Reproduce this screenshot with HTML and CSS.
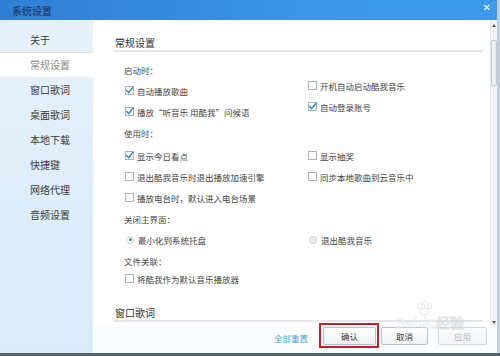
FILE: index.html
```html
<!DOCTYPE html>
<html lang="zh-CN">
<head>
<meta charset="utf-8">
<title>系统设置</title>
<link rel="stylesheet" href="styles.css">
</head>
<body>
<div class="screen">
  <div class="window">
    <div class="titlebar">
      <span class="title">系统设置</span>
      <span class="close">✕</span>
    </div>
    <div class="main">
      <nav class="sidebar">
        <div class="nav-item">关于</div>
        <div class="nav-item active">常规设置</div>
        <div class="nav-item">窗口歌词</div>
        <div class="nav-item">桌面歌词</div>
        <div class="nav-item">本地下载</div>
        <div class="nav-item">快捷键</div>
        <div class="nav-item">网络代理</div>
        <div class="nav-item">音频设置</div>
      </nav>
      <div class="content">
        <div class="scroll-area">
          <div class="pane">
            <div class="heading">常规设置</div>
            <div class="section">
              <div class="label first">启动时：</div>
              <div class="startup">
                <div class="col left-col">
                  <div class="row"><span class="cb on"><svg viewBox="0 0 9 9"><path d="M1.6 4.4 L3.6 6.8 L7.8 1.4"/></svg></span>自动播放歌曲</div>
                  <div class="row"><span class="cb on"><svg viewBox="0 0 9 9"><path d="M1.6 4.4 L3.6 6.8 L7.8 1.4"/></svg></span>播放“听音乐 用酷我”问候语</div>
                </div>
                <div class="col right-col">
                  <div class="row"><span class="cb"></span>开机自动启动酷我音乐</div>
                  <div class="row"><span class="cb on"><svg viewBox="0 0 9 9"><path d="M1.6 4.4 L3.6 6.8 L7.8 1.4"/></svg></span>自动登录账号</div>
                </div>
              </div>
              <div class="label">使用时：</div>
              <div class="grid usage">
                <div class="row"><span class="cb on"><svg viewBox="0 0 9 9"><path d="M1.6 4.4 L3.6 6.8 L7.8 1.4"/></svg></span>显示今日看点</div>
                <div class="row"><span class="cb"></span>显示抽奖</div>
                <div class="row"><span class="cb"></span>退出酷我音乐时退出播放加速引擎</div>
                <div class="row"><span class="cb"></span>同步本地歌曲到云音乐中</div>
                <div class="row"><span class="cb"></span>播放电台时，默认进入电台场景</div>
                <div class="row"></div>
              </div>
              <div class="label">关闭主界面：</div>
              <div class="grid close-opts">
                <div class="row"><span class="radio on"></span>最小化到系统托盘</div>
                <div class="row"><span class="radio"></span>退出酷我音乐</div>
              </div>
              <div class="label">文件关联：</div>
              <div class="grid assoc">
                <div class="row"><span class="cb"></span>将酷我作为默认音乐播放器</div>
              </div>
            </div>
            <div class="heading second">窗口歌词</div>
          </div>
          <div class="scrollbar">
            <span class="arrow up"></span>
            <div class="track"><div class="thumb"></div></div>
            <span class="arrow down"></span>
          </div>
        </div>
        <div class="footer">
          <span class="reset">全部重置</span>
          <button class="btn confirm">确认</button>
          <button class="btn cancel">取消</button>
          <button class="btn apply">应用</button>
        </div>
        <div class="watermark">
          <svg class="paw" viewBox="0 0 20 16"><ellipse cx="5" cy="6" rx="2" ry="2.6"/><ellipse cx="10" cy="3.5" rx="2" ry="2.6"/><ellipse cx="15" cy="6" rx="2" ry="2.6"/><ellipse cx="10" cy="11.5" rx="4.2" ry="3.4"/></svg>
          <span class="wm-text">Bai<span class="gap"></span>du经验</span>
        </div>
      </div>
    </div>
  </div>
  <div class="taskbar"></div>
</div>
</body>
</html>
```

FILE: styles.css
```css
* { box-sizing: border-box; }

html, body {
  margin: 0;
  padding: 0;
}

body {
  width: 500px;
  height: 356px;
  overflow: hidden;
  background: #c3cfdb;
  font-family: "Noto Sans CJK SC", "Noto Sans", sans-serif;
  color: #3a3a3a;
}

.screen {
  width: 500px;
  height: 356px;
  display: flex;
  flex-direction: column;
}

.window {
  width: 497px;
  height: 353px;
  display: flex;
  flex-direction: column;
  background: #fff;
}

.titlebar {
  height: 20px;
  flex: none;
  display: flex;
  align-items: center;
  justify-content: space-between;
  padding: 0 6px 0 12px;
  background: linear-gradient(to right, #2f7ed5, #3a95e7 60%, #3c9ae9);
}

.title {
  font-size: 10px;
  line-height: 14px;
  color: #1c3354;
  margin-top: 2px;
}

.close {
  color: #fff;
  font-family: "DejaVu Sans", sans-serif;
  font-size: 10px;
  font-weight: bold;
  line-height: 10px;
  margin-top: -5px;
}

.main {
  flex: 1;
  display: flex;
  min-height: 0;
}

.sidebar {
  width: 93px;
  flex: none;
  padding-top: 7px;
  background: linear-gradient(to bottom, #e7f1fa, #dcedfa 60%, #d9ecfa);
}

.nav-item {
  height: 25px;
  line-height: 25px;
  padding-left: 30px;
  font-size: 10px;
  color: #3a3a3a;
}

.nav-item.active {
  background: #fff;
  color: #8a8a8a;
  border-top: 1px solid #d3dfea;
  line-height: 24px;
}

.content {
  flex: 1;
  display: flex;
  flex-direction: column;
  position: relative;
  background: #fff;
}

.scroll-area {
  height: 306px;
  flex: none;
  display: flex;
}

.pane {
  flex: 1;
  padding-left: 20px;
  padding-right: 7px;
  overflow: hidden;
}

.heading {
  margin-top: 16px;
  padding-left: 2px;
  font-size: 10px;
  line-height: 14px;
  color: #2e2e2e;
  border-bottom: 2px solid #e3e7eb;
}

.heading.second {
  margin-top: 17px;
}

.section {
  padding-left: 11px;
  font-size: 8.5px;
}

.label {
  line-height: 14px;
  margin-top: 4px;
  color: #4a4a4a;
}

.label.first {
  margin-top: 11px;
}

.startup {
  display: grid;
  grid-template-columns: 183px 1fr;
  margin-top: -1px;
}

.left-col {
  padding-top: 4px;
}

.right-col {
  margin-top: -1px;
}

.grid {
  display: grid;
  grid-template-columns: 183px 1fr;
}

.usage {
  margin-top: 5px;
}

.close-opts {
  margin-top: 3px;
}

.assoc {
  margin-top: 0;
}

.row {
  height: 21px;
  display: flex;
  align-items: center;
  gap: 3px;
  color: #444;
  white-space: nowrap;
}

.cb {
  width: 9px;
  height: 9px;
  margin-left: 1px;
  border: 1px solid #a9b3bd;
  background: #fff;
  position: relative;
  flex: none;
}

.cb svg {
  position: absolute;
  left: -1px;
  top: -1px;
  width: 9px;
  height: 9px;
}

.cb svg path {
  fill: none;
  stroke: #2a86c4;
  stroke-width: 1.4;
  stroke-linecap: round;
  stroke-linejoin: round;
}

.radio {
  width: 8px;
  height: 8px;
  margin-left: 2px;
  margin-right: 1px;
  border-radius: 50%;
  border: 1px solid #c6ced6;
  background: #eef1f4;
  flex: none;
  position: relative;
}

.radio.on {
  background: #fff;
}

.radio.on::after {
  content: "";
  position: absolute;
  left: 1.5px;
  top: 1.5px;
  width: 3px;
  height: 3px;
  border-radius: 50%;
  background: #3a8bd2;
}

.scrollbar {
  width: 7px;
  flex: none;
  display: flex;
  flex-direction: column;
  align-items: center;
  padding-top: 2px;
  background: #f2f4f6;
  border-left: 1px solid #e2e6ea;
}

.arrow {
  width: 0;
  height: 0;
  border-left: 2.5px solid transparent;
  border-right: 2.5px solid transparent;
  flex: none;
}

.arrow.up {
  border-bottom: 3px solid #555;
  margin-top: 2px;
}

.arrow.down {
  border-top: 3px solid #555;
  margin-bottom: 2px;
}

.track {
  flex: 1;
  width: 100%;
  padding-top: 13px;
}

.thumb {
  width: 6px;
  height: 46px;
  border: 1px solid #c4cad0;
  border-radius: 2px;
  background: linear-gradient(to right, #f7f8f9, #e6e9ec);
}

.footer {
  flex: 1;
  display: flex;
  align-items: flex-start;
  justify-content: flex-end;
  padding: 1px 10px 0 0;
  background: #fbfcfd;
}

.reset {
  font-size: 8.5px;
  line-height: 18px;
  margin-top: 2px;
  color: #4fa3cf;
  margin-right: 15px;
}

.btn {
  height: 18px;
  padding: 0;
  margin: 0;
  font-family: "Noto Sans CJK SC", sans-serif;
  font-size: 8.5px;
  line-height: 16px;
  color: #333;
  border: 1px solid #b9c2cb;
  border-radius: 2px;
  background: linear-gradient(to bottom, #ffffff, #eef1f4);
}

.confirm {
  width: 53px;
  position: relative;
}

.confirm::after {
  content: "";
  position: absolute;
  left: -5px;
  top: -5px;
  right: -4px;
  bottom: -4px;
  border: 2px solid #c1202b;
}

.cancel {
  width: 47px;
  margin-left: 5px;
}

.apply {
  width: 49px;
  margin-left: 10px;
  color: #b5b9bd;
  border-color: #d3d8dd;
  background: linear-gradient(to bottom, #fbfcfc, #f2f4f6);
}

.watermark {
  position: absolute;
  left: 302px;
  top: 280px;
  display: flex;
  flex-direction: column;
  align-items: center;
  pointer-events: none;
  opacity: 0.7;
}

.paw {
  width: 20px;
  height: 16px;
  margin-left: -8px;
}

.paw ellipse {
  fill: none;
  stroke: #d8dbde;
  stroke-width: 1;
}

.wm-text {
  font-family: "Liberation Sans", sans-serif;
  font-weight: bold;
  font-size: 14px;
  line-height: 14px;
  color: rgba(255, 255, 255, 0.6);
  -webkit-text-stroke: 0.5px #d6d9dc;
  white-space: nowrap;
}

.gap {
  display: inline-block;
  width: 2px;
}

.taskbar {
  height: 3px;
  width: 500px;
  background: #56616d;
}
```
